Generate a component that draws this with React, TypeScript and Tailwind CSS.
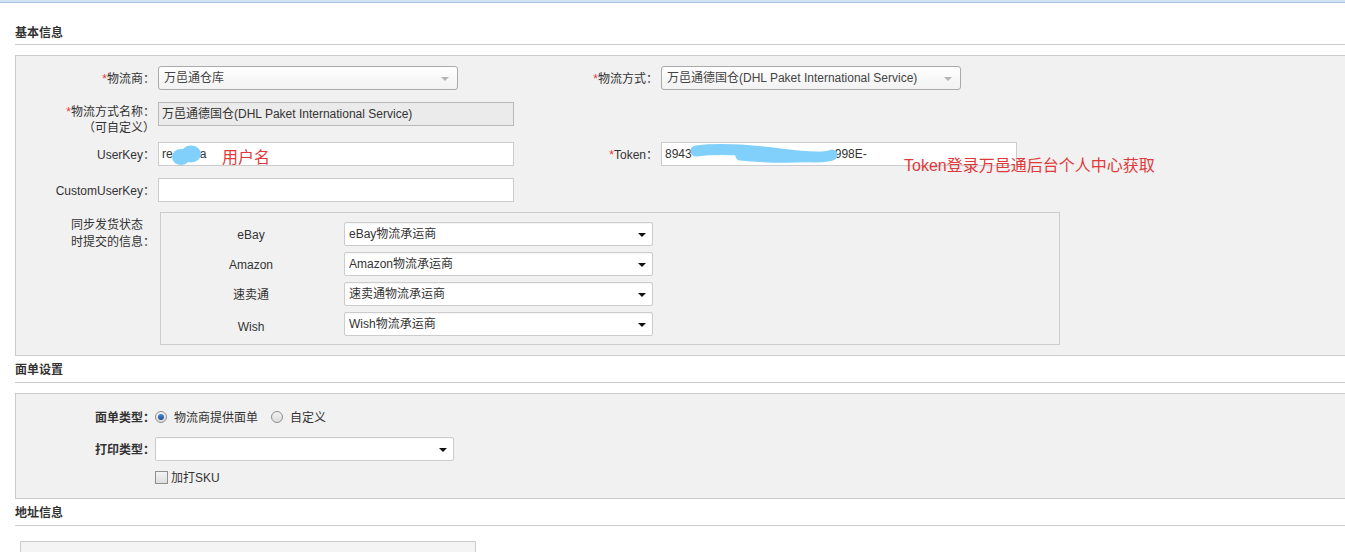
import React from 'react'

const FONT = "font-['Liberation_Sans','Noto_Sans_CJK_SC',sans-serif]"

const ChosenSelect = ({ value, width }: { value: string; width: string }) => (
    <div
        className={`${width} relative flex h-[24px] items-center rounded-[3px] border border-[#aaaaaa] bg-gradient-to-b from-white via-[#f8f8f8] to-[#f2f2f2] pl-[5px] text-[12px] text-[#444]`}
    >
        <span className="truncate">{value}</span>
        <span className="absolute right-[8px] top-[10px] h-0 w-0 border-x-[4px] border-t-[4px] border-x-transparent border-t-[#b4b4b4]" />
    </div>
)

const PlainSelect = ({ value, width }: { value: string; width: string }) => (
    <div
        className={`${width} relative flex h-[24px] items-center rounded-[2px] border border-[#cccccc] bg-white pl-[4px] text-[12px] text-[#333] shadow-[inset_0_1px_1px_rgba(0,0,0,0.04)]`}
    >
        <span className="truncate">{value}</span>
        <span className="absolute right-[6px] top-[10px] h-0 w-0 border-x-[4px] border-t-[4px] border-x-transparent border-t-[#111]" />
    </div>
)

const TextInput = ({
    children,
    disabled,
    width = 'w-[356px]',
}: {
    children?: React.ReactNode
    disabled?: boolean
    width?: string
}) => (
    <div
        className={`${width} relative flex h-[24px] items-center border pl-[3px] text-[12px] ${
            disabled ? 'border-[#b9b9b9] bg-[#ebebeb] text-[#333]' : 'border-[#cccccc] bg-white text-[#333]'
        }`}
    >
        {children}
    </div>
)

const Req = () => <span className="text-[#e4393c]">*</span>

const SectionTitle = ({ title, pt, pb }: { title: string; pt: string; pb: string }) => (
    <div className={`ml-[15px] border-b border-[#cccccc] ${pt} ${pb}`}>
        <h3 className="text-[12px] font-bold leading-[16px] text-[#333]">{title}</h3>
    </div>
)

const Radio = ({ checked }: { checked?: boolean }) => (
    <span className="flex h-[12px] w-[12px] items-center justify-center rounded-full border border-[#8f8f8f] bg-gradient-to-b from-[#f2f2f2] to-[#dcdcdc]">
        {checked && <span className="h-[6px] w-[6px] rounded-full bg-gradient-to-b from-[#4a8ad0] to-[#1d4f8c]" />}
    </span>
)

const platforms = [
    { name: 'eBay', value: 'eBay物流承运商', pt: '' },
    { name: 'Amazon', value: 'Amazon物流承运商', pt: '' },
    { name: '速卖通', value: '速卖通物流承运商', pt: '' },
    { name: 'Wish', value: 'Wish物流承运商', pt: 'pt-[5px]' },
]

export default function App() {
    return (
        <div className={`${FONT} min-h-[552px] w-full overflow-hidden bg-white text-[12px] text-[#333]`}>
            <div className="h-[3px] border-b border-[#a9c3e2] bg-[#d3e3f5]" />

            <SectionTitle title="基本信息" pt="pt-[22px]" pb="pb-[3px]" />

            {/* 基本信息 panel */}
            <div className="ml-[15px] mt-[10px] border border-r-0 border-[#cccccc] bg-[#f1f1f1] pb-[10px] pt-[10px]">
                <div className="flex items-center">
                    <label className="w-[142px] pr-[3px] pt-[1px] text-right">
                        <Req />
                        物流商：
                    </label>
                    <div className="w-[356px]">
                        <ChosenSelect value="万邑通仓库" width="w-[300px]" />
                    </div>
                    <label className="w-[147px] pr-[3px] pt-[1px] text-right">
                        <Req />
                        物流方式：
                    </label>
                    <ChosenSelect value="万邑通德国仓(DHL Paket International Service)" width="w-[300px]" />
                </div>

                <div className="mt-[12px] flex items-start">
                    <label className="w-[142px] pr-[3px] pt-[2px] text-right leading-[16px]">
                        <Req />
                        物流方式名称：
                        <br />
                        （可自定义）
                    </label>
                    <TextInput disabled>万邑通德国仓(DHL Paket International Service)</TextInput>
                </div>

                <div className="relative mt-[6px] flex items-center">
                    <label className="w-[142px] pr-[3px] pt-[1px] text-right">UserKey：</label>
                    <TextInput>
                        <span>re</span>
                        <span className="inline-block w-[27px]" />
                        <span>a</span>
                        <svg className="absolute left-[13px] top-[2px]" width="30" height="21" viewBox="0 0 30 21">
                            <ellipse cx="9" cy="12" rx="9" ry="8" fill="#80d0fb" />
                            <ellipse cx="19" cy="9" rx="10" ry="8.5" fill="#80d0fb" />
                        </svg>
                        <span className="absolute left-[63px] top-[5px] whitespace-nowrap text-[16px] leading-[20px] text-[#e0393c]">
                            用户名
                        </span>
                    </TextInput>
                    <label className="w-[147px] pr-[3px] pt-[1px] text-right">
                        <Req />
                        Token：
                    </label>
                    <TextInput>
                        <span>8943</span>
                        <span className="inline-block w-[143px]" />
                        <span>998E-</span>
                        <svg className="absolute left-[28px] top-[1px]" width="150" height="22" viewBox="0 0 150 22">
                            <path
                                d="M6 7 C 30 4, 60 6, 90 10 S 135 14, 142 11"
                                stroke="#80d0fb"
                                strokeWidth="11"
                                strokeLinecap="round"
                                fill="none"
                            />
                            <path d="M50 12 C 80 15, 110 15, 140 12" stroke="#80d0fb" strokeWidth="9" strokeLinecap="round" fill="none" />
                        </svg>
                    </TextInput>
                    <span className="absolute left-[888px] top-[14px] whitespace-nowrap text-[16px] leading-[20px] text-[#e0393c]">
                        Token登录万邑通后台个人中心获取
                    </span>
                </div>

                <div className="mt-[12px] flex items-center">
                    <label className="w-[142px] pr-[3px] pt-[1px] text-right">CustomUserKey：</label>
                    <TextInput />
                </div>

                <div className="mt-[10px] flex items-start">
                    <div className="flex w-[142px] justify-end pr-[3px] pt-[5px]">
                        <div className="text-left leading-[17px]">
                            同步发货状态
                            <br />
                            时提交的信息：
                        </div>
                    </div>
                    <div className="ml-[2px] w-[900px] border border-[#cccccc] pb-[8px] pt-[9px]">
                        <div className="flex flex-col gap-[6px]">
                            {platforms.map((p) => (
                                <div key={p.name} className="flex items-center">
                                    <div className={`w-[180px] pt-[1px] text-center ${p.pt}`}>{p.name}</div>
                                    <div className="ml-[3px]">
                                        <PlainSelect value={p.value} width="w-[309px]" />
                                    </div>
                                </div>
                            ))}
                        </div>
                    </div>
                </div>
            </div>

            <SectionTitle title="面单设置" pt="pt-[6px]" pb="pb-[4px]" />

            {/* 面单设置 panel */}
            <div className="ml-[15px] mt-[10px] border border-r-0 border-[#cccccc] bg-[#f1f1f1] pb-[13px] pt-[11px]">
                <div className="flex h-[24px] items-center">
                    <label className="w-[139px] pt-[1px] text-right font-bold">面单类型：</label>
                    <Radio checked />
                    <span className="ml-[7px] pt-[1px]">物流商提供面单</span>
                    <span className="ml-[13px]">
                        <Radio />
                    </span>
                    <span className="ml-[7px] pt-[1px]">自定义</span>
                </div>
                <div className="mt-[8px] flex items-center">
                    <label className="w-[139px] pt-[1px] text-right font-bold">打印类型：</label>
                    <PlainSelect value="" width="w-[299px]" />
                </div>
                <div className="mt-[8px] flex h-[16px] items-center pl-[139px]">
                    <span className="h-[13px] w-[13px] border border-[#8f8f8f] bg-gradient-to-b from-[#f4f4f4] to-[#dedede]" />
                    <span className="ml-[3px] pt-[1px]">加打SKU</span>
                </div>
            </div>

            <SectionTitle title="地址信息" pt="pt-[6px]" pb="pb-[4px]" />

            <div className="ml-[20px] mt-[15px] h-[30px] w-[456px] border border-[#cccccc] bg-[#f4f4f4]" />
        </div>
    )
}
